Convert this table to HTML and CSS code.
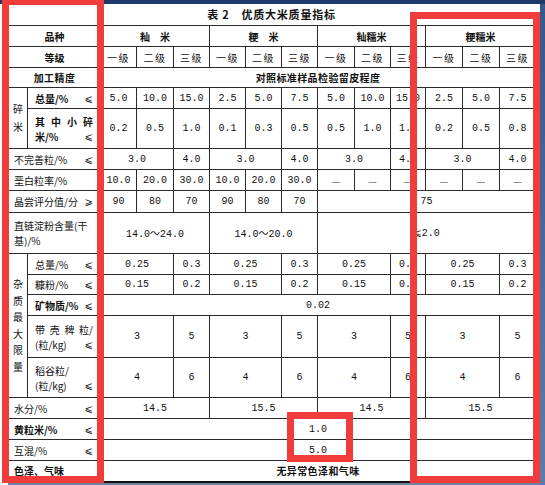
FILE: index.html
```html
<!DOCTYPE html>
<html lang="zh">
<head>
<meta charset="utf-8">
<title>优质大米质量指标</title>
<link rel="stylesheet" href="styles.css">
</head>
<body>
<div class="screen">
  <div class="topbar"></div>
  <div class="main">
    <div class="doc">
      <div class="title">表 2　优质大米质量指标</div>
      <table class="grid">
        <colgroup>
          <col class="w19"><col class="w73">
          <col class="w36"><col class="w37"><col class="w36">
          <col class="w36"><col class="w36"><col class="w36">
          <col class="w37"><col class="w36"><col class="w35">
          <col class="w37"><col class="w37"><col class="w36">
        </colgroup>
        <tr class="h21">
          <td colspan="2" class="b">品种</td>
          <td colspan="3" class="b">籼　米</td>
          <td colspan="3" class="b">粳　米</td>
          <td colspan="3" class="b">籼糯米</td>
          <td colspan="3" class="b">粳糯米</td>
        </tr>
        <tr class="h21">
          <td colspan="2" class="b">等级</td>
          <td class="g">一级</td><td class="g">二级</td><td class="g">三级</td>
          <td class="g">一级</td><td class="g">二级</td><td class="g">三级</td>
          <td class="g">一级</td><td class="g">二级</td><td class="g">三级</td>
          <td class="g">一级</td><td class="g">二级</td><td class="g">三级</td>
        </tr>
        <tr class="h20">
          <td colspan="2" class="b sp">加工精度</td>
          <td colspan="12" class="b sp">对照标准样品检验留皮程度</td>
        </tr>
        <tr class="h21">
          <td rowspan="2" class="vert v18">碎<br>米</td>
          <td class="sub"><div class="row b"><span>总量/%</span><span class="le">⩽</span></div></td>
          <td class="n">5.0</td><td class="n">10.0</td><td class="n">15.0</td>
          <td class="n">2.5</td><td class="n">5.0</td><td class="n">7.5</td>
          <td class="n">5.0</td><td class="n">10.0</td><td class="n">15.0</td>
          <td class="n">2.5</td><td class="n">5.0</td><td class="n">7.5</td>
        </tr>
        <tr class="h40">
          <td class="sub">
            <div class="row b"><span>其</span><span>中</span><span>小</span><span>碎</span></div>
            <div class="row b"><span>米/%</span><span class="le">⩽</span></div>
          </td>
          <td class="n">0.2</td><td class="n">0.5</td><td class="n">1.0</td>
          <td class="n">0.1</td><td class="n">0.3</td><td class="n">0.5</td>
          <td class="n">0.5</td><td class="n">1.0</td><td class="n">1.5</td>
          <td class="n">0.2</td><td class="n">0.5</td><td class="n">0.8</td>
        </tr>
        <tr class="h21">
          <td colspan="2" class="full"><div class="row"><span>不完善粒/%</span><span class="le">⩽</span></div></td>
          <td colspan="2" class="n">3.0</td><td class="n">4.0</td>
          <td colspan="2" class="n">3.0</td><td class="n">4.0</td>
          <td colspan="2" class="n">3.0</td><td class="n">4.0</td>
          <td colspan="2" class="n">3.0</td><td class="n">4.0</td>
        </tr>
        <tr class="h21">
          <td colspan="2" class="full"><div class="row"><span>垩白粒率/%</span></div></td>
          <td class="n">10.0</td><td class="n">20.0</td><td class="n">30.0</td>
          <td class="n">10.0</td><td class="n">20.0</td><td class="n">30.0</td>
          <td class="dash">—</td><td class="dash">—</td><td class="dash">—</td>
          <td class="dash">—</td><td class="dash">—</td><td class="dash">—</td>
        </tr>
        <tr class="h22">
          <td colspan="2" class="full"><div class="row"><span>晶尝评分值/分</span><span class="le">⩾</span></div></td>
          <td class="n">90</td><td class="n">80</td><td class="n">70</td>
          <td class="n">90</td><td class="n">80</td><td class="n">70</td>
          <td colspan="6" class="n">75</td>
        </tr>
        <tr class="h41">
          <td colspan="2" class="full">
            <div class="row"><span>直链淀粉含量(干</span></div>
            <div class="row"><span>基)/%</span></div>
          </td>
          <td colspan="3" class="n">14.0<span class="cj">～</span>24.0</td>
          <td colspan="3" class="n">14.0<span class="cj">～</span>20.0</td>
          <td colspan="6" class="n"><span class="le">⩽</span>2.0</td>
        </tr>
        <tr class="h21">
          <td rowspan="5" class="vert v165">杂<br>质<br>最<br>大<br>限<br>量</td>
          <td class="sub"><div class="row"><span>总量/%</span><span class="le">⩽</span></div></td>
          <td colspan="2" class="n">0.25</td><td class="n">0.3</td>
          <td colspan="2" class="n">0.25</td><td class="n">0.3</td>
          <td colspan="2" class="n">0.25</td><td class="n">0.3</td>
          <td colspan="2" class="n">0.25</td><td class="n">0.3</td>
        </tr>
        <tr class="h20">
          <td class="sub"><div class="row"><span>糠粉/%</span><span class="le">⩽</span></div></td>
          <td colspan="2" class="n">0.15</td><td class="n">0.2</td>
          <td colspan="2" class="n">0.15</td><td class="n">0.2</td>
          <td colspan="2" class="n">0.15</td><td class="n">0.2</td>
          <td colspan="2" class="n">0.15</td><td class="n">0.2</td>
        </tr>
        <tr class="h21">
          <td class="sub"><div class="row b"><span>矿物质/%</span><span class="le">⩽</span></div></td>
          <td colspan="12" class="n">0.02</td>
        </tr>
        <tr class="h42">
          <td class="sub">
            <div class="row"><span>带</span><span>壳</span><span>稗</span><span>粒/</span></div>
            <div class="row"><span>(粒/kg)</span><span class="le">⩽</span></div>
          </td>
          <td colspan="2" class="n">3</td><td class="n">5</td>
          <td colspan="2" class="n">3</td><td class="n">5</td>
          <td colspan="2" class="n">3</td><td class="n">5</td>
          <td colspan="2" class="n">3</td><td class="n">5</td>
        </tr>
        <tr class="h40">
          <td class="sub">
            <div class="row"><span>稻谷粒/</span></div>
            <div class="row"><span>(粒/kg)</span><span class="le">⩽</span></div>
          </td>
          <td colspan="2" class="n">4</td><td class="n">6</td>
          <td colspan="2" class="n">4</td><td class="n">6</td>
          <td colspan="2" class="n">4</td><td class="n">6</td>
          <td colspan="2" class="n">4</td><td class="n">6</td>
        </tr>
        <tr class="h21">
          <td colspan="2" class="full"><div class="row"><span>水分/%</span><span class="le">⩽</span></div></td>
          <td colspan="3" class="n">14.5</td>
          <td colspan="3" class="n">15.5</td>
          <td colspan="3" class="n">14.5</td>
          <td colspan="3" class="n">15.5</td>
        </tr>
        <tr class="h21">
          <td colspan="2" class="full"><div class="row b"><span>黄粒米/%</span><span class="le">⩽</span></div></td>
          <td colspan="12" class="n">1.0</td>
        </tr>
        <tr class="h21">
          <td colspan="2" class="full"><div class="row"><span>互混/%</span><span class="le">⩽</span></div></td>
          <td colspan="12" class="n">5.0</td>
        </tr>
        <tr class="h21 last">
          <td colspan="2" class="full"><div class="row b"><span>色泽、气味</span></div></td>
          <td colspan="12" class="b sp">无异常色泽和气味</td>
        </tr>
      </table>
      <div class="cutoff"></div>
    </div>
    <div class="side"></div>
  </div>
  <div class="mark mark-left"></div>
  <div class="mark mark-right"></div>
  <div class="mark mark-mid"></div>
</div>
</body>
</html>
```

FILE: styles.css
```css
* { box-sizing: border-box; }
html, body { margin: 0; padding: 0; }
body {
  width: 545px;
  height: 485px;
  overflow: hidden;
  background: #fff;
  font-family: "Noto Sans CJK SC", "Noto Sans", sans-serif;
  color: #111;
}
.screen {
  position: relative;
  width: 545px;
  height: 485px;
  display: flex;
  flex-direction: column;
  background: #fff;
  overflow: hidden;
}
.topbar {
  flex: none;
  height: 4px;
  background: #1d3a6a;
}
.main {
  flex: 1;
  display: flex;
  min-height: 0;
}
.doc {
  width: 540px;
  padding-left: 8px;
  display: flex;
  flex-direction: column;
}
.side {
  flex: 1;
  background: linear-gradient(#35578c, #5d7cab);
}
.title {
  flex: none;
  width: 527px;
  height: 21px;
  line-height: 21px;
  text-align: center;
  font-size: 11px;
  font-weight: bold;
  letter-spacing: 0.8px;
}
.grid {
  flex: none;
  border-collapse: collapse;
  table-layout: fixed;
  width: 527px;
}
.w19 { width: 19px; }
.w73 { width: 73px; }
.w35 { width: 35px; }
.w36 { width: 36px; }
.w37 { width: 37px; }
.h20 { height: 20px; }
.h21 { height: 21px; }
.h22 { height: 22px; }
.h40 { height: 40px; }
.h41 { height: 41px; }
.h42 { height: 42px; }
.grid td {
  border: 1px solid #2b2b2b;
  padding: 0;
  text-align: center;
  vertical-align: middle;
  font-size: 10px;
  line-height: 15px;
  white-space: nowrap;
  overflow: hidden;
}
.grid .last td { border-bottom: 2px solid #111; }
.b { font-weight: bold; }
.sp { letter-spacing: 0.4px; }
.grid td.g { letter-spacing: 1.5px; }
.grid td.n {
  font-family: "Liberation Mono", monospace;
  font-size: 10px;
}
.cj { font-family: "Noto Sans CJK SC", sans-serif; }
.grid td.dash { color: #777; font-size: 10px; }
.grid td.vert { white-space: normal; }
.grid td.v18 { line-height: 18px; }
.grid td.v165 { line-height: 16.5px; }
.grid td.full { text-align: left; padding: 0 7px 0 5px; }
.grid td.sub { text-align: left; padding: 0 7px 0 7px; }
.row {
  display: flex;
  justify-content: space-between;
  align-items: center;
}
.le { font-family: "DejaVu Sans", sans-serif; font-size: 10px; font-weight: normal; }
.cutoff {
  flex: 1;
  border-bottom: 2px solid #6f829f;
}
.mark {
  position: absolute;
  border: 7px solid #f23b3b;
}
.mark-left { left: 2px; top: -2px; width: 102px; height: 485px; }
.mark-right { left: 410px; top: 12px; width: 130px; height: 471px; }
.mark-mid { left: 287px; top: 412px; width: 66px; height: 50px; }
```
